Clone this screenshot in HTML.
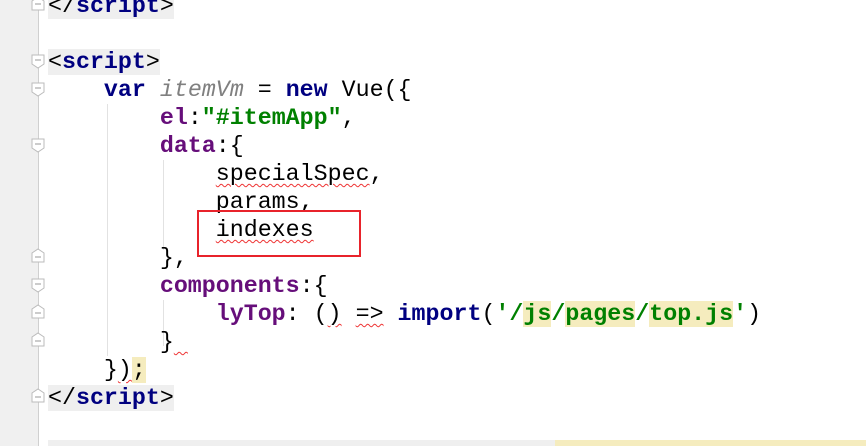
<!DOCTYPE html>
<html><head><meta charset="utf-8"><style>
body{margin:0;width:866px;height:446px;overflow:hidden;background:#fff;position:relative;font-family:"Liberation Mono",monospace;}
.g{position:absolute;left:0;top:0;width:38px;height:446px;background:#f0f0f0;}
.gl{position:absolute;left:38px;top:0;width:1px;height:446px;background:#d0d0d0;}
.l{position:absolute;left:48px;height:28px;line-height:28px;font-size:23.3px;white-space:pre;color:#000;}
.t{color:#000080;font-weight:bold}
.tag{background:#efefef}
.k{color:#000080;font-weight:bold}
.i{color:#808080;font-style:italic}
.p{color:#660e7a;font-weight:bold}
.s{color:#008000;font-weight:bold}
.y{background:#f5ecbe}
.w{text-decoration:underline wavy #e33;text-decoration-thickness:1px;text-underline-offset:3px}
.ig{position:absolute;width:1px;background:#e2e2e2}
.f{position:absolute;left:31px;width:14px;height:15px}
</style></head><body>
<div class="g"></div><div class="gl"></div>
<div class="ig" style="left:107px;top:104px;height:252px"></div>
<div class="ig" style="left:163px;top:160px;height:90px"></div>
<div class="ig" style="left:163px;top:300px;height:46px"></div>

<svg class="f" style="top:-4px" viewBox="0 0 14 15"><path d="M1 14V5L7 1L13 5V14Z" fill="#fff" stroke="#bbb"/><path d="M4 8h6" stroke="#999"/></svg>
<svg class="f" style="top:54px" viewBox="0 0 14 15"><path d="M1 1V10L7 14L13 10V1Z" fill="#fff" stroke="#bbb"/><path d="M4 6h6" stroke="#999"/></svg>
<svg class="f" style="top:82px" viewBox="0 0 14 15"><path d="M1 1V10L7 14L13 10V1Z" fill="#fff" stroke="#bbb"/><path d="M4 6h6" stroke="#999"/></svg>
<svg class="f" style="top:138px" viewBox="0 0 14 15"><path d="M1 1V10L7 14L13 10V1Z" fill="#fff" stroke="#bbb"/><path d="M4 6h6" stroke="#999"/></svg>
<svg class="f" style="top:248px" viewBox="0 0 14 15"><path d="M1 14V5L7 1L13 5V14Z" fill="#fff" stroke="#bbb"/><path d="M4 9h6" stroke="#999"/></svg>
<svg class="f" style="top:278px" viewBox="0 0 14 15"><path d="M1 1V10L7 14L13 10V1Z" fill="#fff" stroke="#bbb"/><path d="M4 6h6" stroke="#999"/></svg>
<svg class="f" style="top:304px" viewBox="0 0 14 15"><path d="M1 14V5L7 1L13 5V14Z" fill="#fff" stroke="#bbb"/><path d="M4 9h6" stroke="#999"/></svg>
<svg class="f" style="top:332px" viewBox="0 0 14 15"><path d="M1 14V5L7 1L13 5V14Z" fill="#fff" stroke="#bbb"/><path d="M4 9h6" stroke="#999"/></svg>
<svg class="f" style="top:388px" viewBox="0 0 14 15"><path d="M1 14V5L7 1L13 5V14Z" fill="#fff" stroke="#bbb"/><path d="M4 9h6" stroke="#999"/></svg>

<div class="l" style="top:-8px"><span class="tag">&lt;/<span class="t">script</span>&gt;</span></div>
<div class="l" style="top:48px"><span class="tag">&lt;<span class="t">script</span>&gt;</span></div>
<div class="l" style="top:76px">    <span class="k">var</span> <span class="i">itemVm</span> = <span class="k">new</span> Vue({</div>
<div class="l" style="top:104px">        <span class="p">el</span>:<span class="s">"#itemApp"</span>,</div>
<div class="l" style="top:132px">        <span class="p">data</span>:{</div>
<div class="l" style="top:160px">            <span class="w">specialSpec</span>,</div>
<div class="l" style="top:188px">            params,</div>
<div class="l" style="top:216px">            <span class="w">indexes</span></div>
<div class="l" style="top:244px">        },</div>
<div class="l" style="top:272px">        <span class="p">components</span>:{</div>
<div class="l" style="top:300px">            <span class="p">lyTop</span>: (<span class="w">)</span> <span class="w">=&gt;</span> <span class="k">import</span>(<span class="s">'/<span class="y">js</span>/<span class="y">pages</span>/<span class="y">top.js</span>'</span>)</div>
<div class="l" style="top:328px">        }<span class="w"> </span></div>
<div class="l" style="top:356px">    }<span class="w">)</span><span class="y">;</span></div>
<div class="l" style="top:384px"><span class="tag">&lt;/<span class="t">script</span>&gt;</span></div>
<div style="position:absolute;left:48px;top:440px;width:507px;height:6px;background:#efefef"></div>
<div style="position:absolute;left:555px;top:440px;width:311px;height:6px;background:#f5ecbe"></div>
<div style="position:absolute;left:197px;top:210px;width:160px;height:43px;border:2px solid #e8232b"></div>
</body></html>
